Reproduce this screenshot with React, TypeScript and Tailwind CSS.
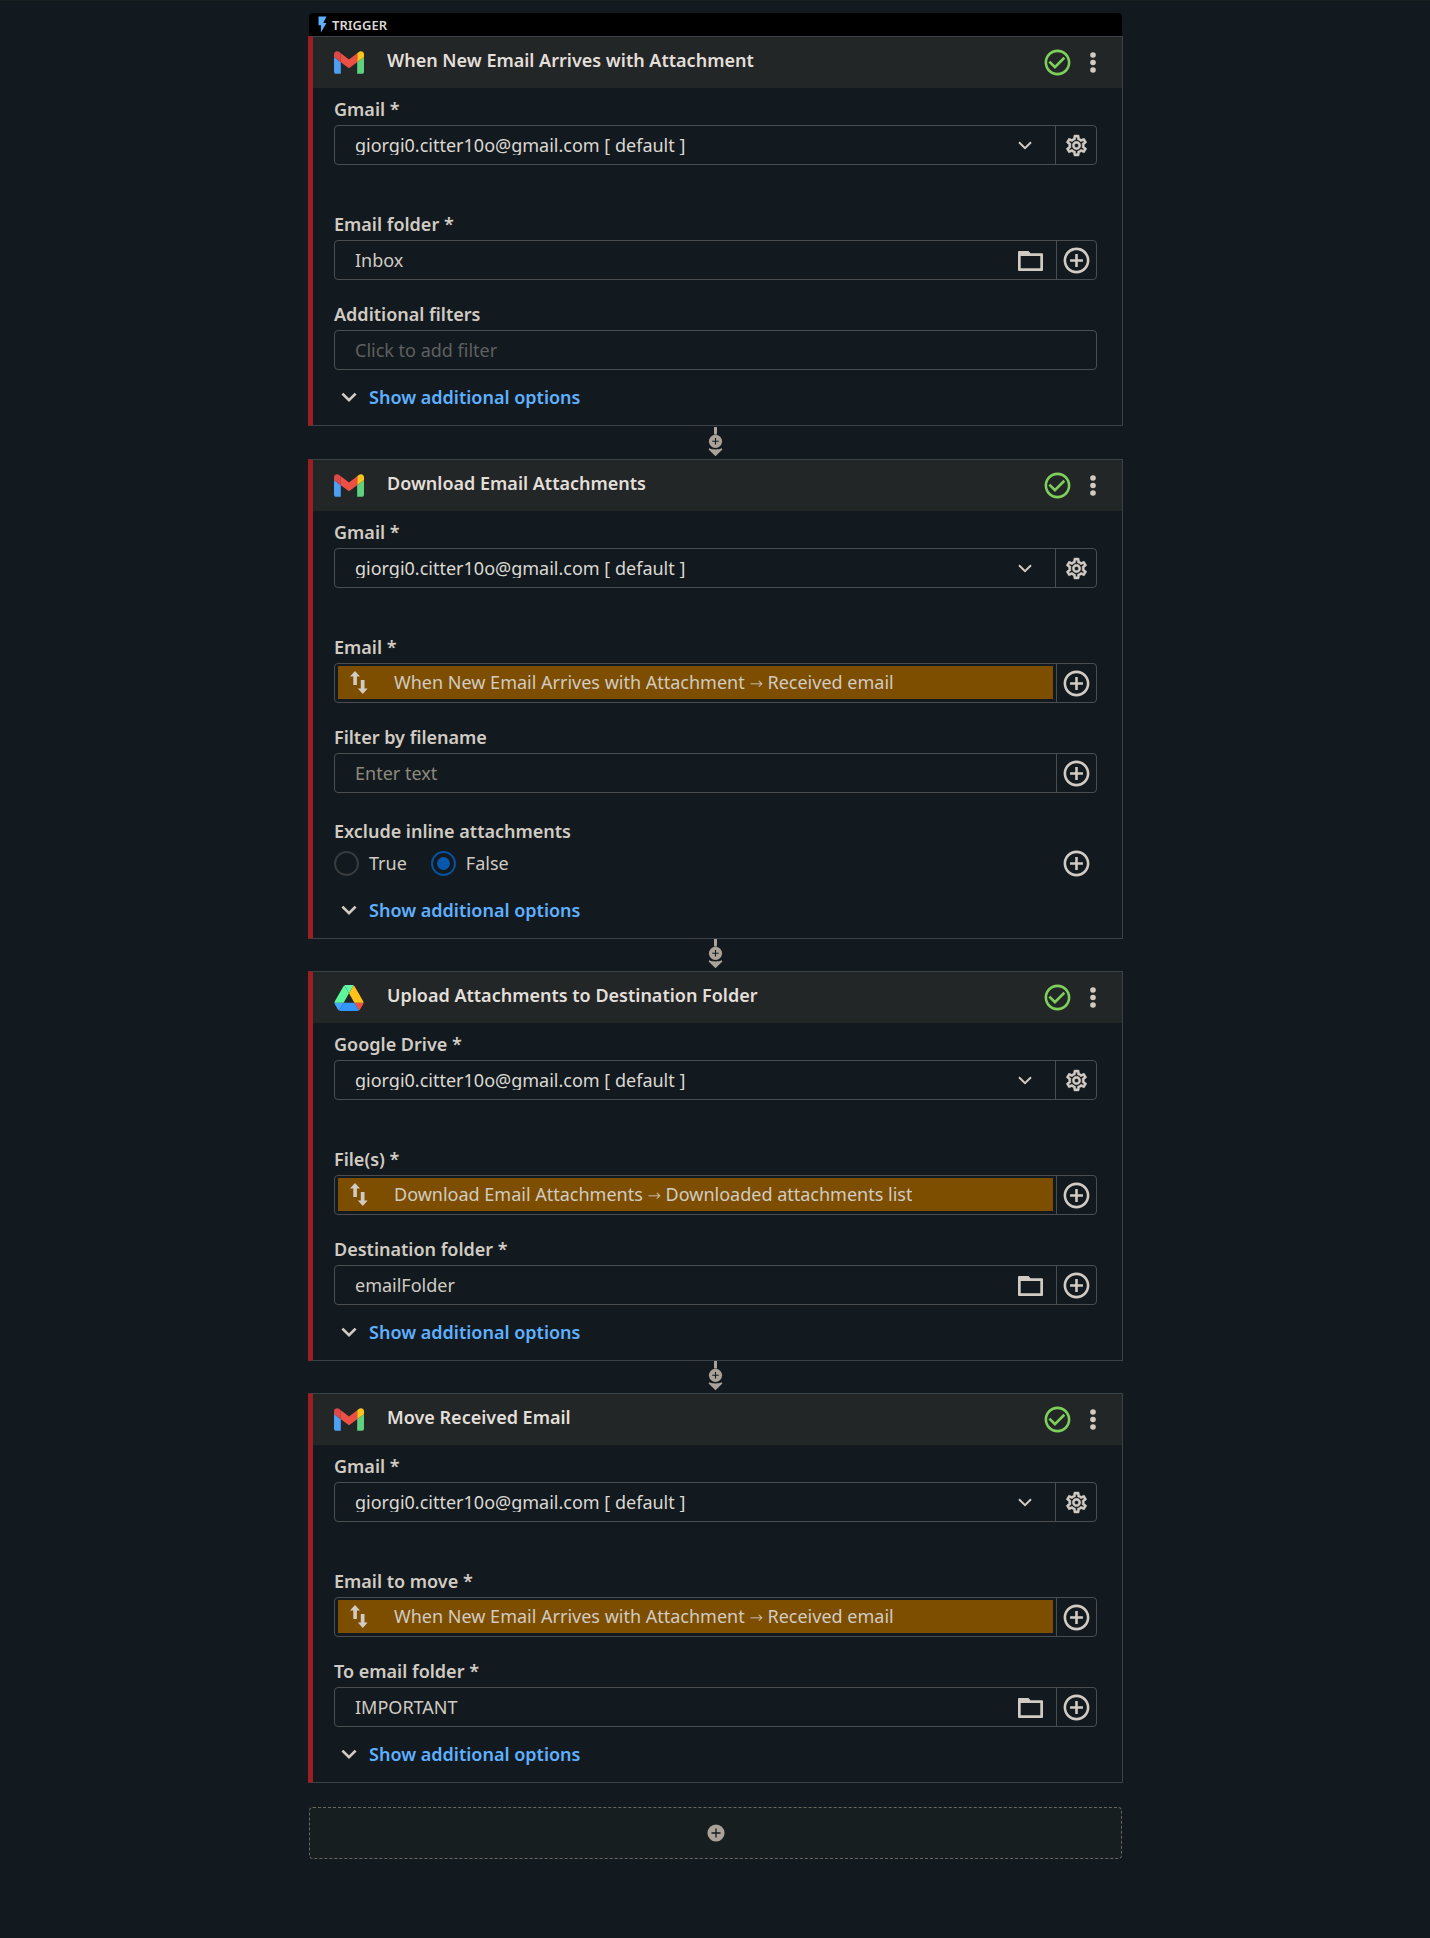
import React, { useId, useState } from "react";
import {
  MdAddCircleOutline,
  MdCheckCircleOutline,
  MdFlashOn,
  MdOutlineSettings,
} from "react-icons/md";

type Field =
  | { kind: "folder"; label: string; value: string }
  | { kind: "filter"; label: string; placeholder: string }
  | { kind: "text"; label: string; placeholder: string }
  | { kind: "mapped"; label: string; step: string; output: string }
  | { kind: "boolean"; label: string; value: boolean };

type Step = {
  title: string;
  service: "gmail" | "drive";
  trigger?: boolean;
  fields: Field[];
};

const ACCOUNT = "giorgi0.citter10o@gmail.com [ default ]";

const steps: Step[] = [
  {
    title: "When New Email Arrives with Attachment",
    service: "gmail",
    trigger: true,
    fields: [
      { kind: "folder", label: "Email folder *", value: "Inbox" },
      { kind: "filter", label: "Additional filters", placeholder: "Click to add filter" },
    ],
  },
  {
    title: "Download Email Attachments",
    service: "gmail",
    fields: [
      {
        kind: "mapped",
        label: "Email *",
        step: "When New Email Arrives with Attachment",
        output: "Received email",
      },
      { kind: "text", label: "Filter by filename", placeholder: "Enter text" },
      { kind: "boolean", label: "Exclude inline attachments", value: false },
    ],
  },
  {
    title: "Upload Attachments to Destination Folder",
    service: "drive",
    fields: [
      {
        kind: "mapped",
        label: "File(s) *",
        step: "Download Email Attachments",
        output: "Downloaded attachments list",
      },
      { kind: "folder", label: "Destination folder *", value: "emailFolder" },
    ],
  },
  {
    title: "Move Received Email",
    service: "gmail",
    fields: [
      {
        kind: "mapped",
        label: "Email to move *",
        step: "When New Email Arrives with Attachment",
        output: "Received email",
      },
      { kind: "folder", label: "To email folder *", value: "IMPORTANT" },
    ],
  },
];

function GmailLogo() {
  return (
    <svg viewBox="52 42 88 66" className="h-[23px] w-[30px]" aria-hidden="true">
      <path fill="#4c9ff2" d="M58 108h14V74L52 59v43c0 3.32 2.69 6 6 6" />
      <path fill="#5fd07f" d="M120 108h14c3.32 0 6-2.69 6-6V59l-20 15" />
      <path fill="#fcc419" d="M120 48v26l20-15v-8c0-7.42-8.47-11.65-14.4-7.2" />
      <path fill="#ec5044" d="M72 74V48l24 18 24-18v26L96 92" />
      <path fill="#dd4848" d="M52 51v8l20 15V48l-5.6-4.2c-5.94-4.45-14.4-.22-14.4 7.2" />
    </svg>
  );
}

function DriveLogo() {
  return (
    <svg viewBox="0 0 87.3 78" className="h-[26px] w-[30px]" aria-hidden="true">
      <path fill="#45a5ff" d="m6.6 66.85 3.85 6.65c.8 1.4 1.95 2.5 3.3 3.3l13.75-23.8h-27.5c0 1.55.4 3.1 1.2 4.5z" />
      <path fill="#5cf79a" d="m43.65 25-13.75-23.8c-1.35.8-2.5 1.9-3.3 3.3l-25.4 44a9.06 9.06 0 0 0 -1.2 4.5h27.5z" />
      <path fill="#ef5245" d="m73.55 76.8c1.35-.8 2.5-1.9 3.3-3.3l1.6-2.75 7.65-13.25c.8-1.4 1.2-2.95 1.2-4.5h-27.502l5.852 11.5z" />
      <path fill="#63f5a8" d="m43.65 25 13.75-23.8c-1.35-.8-2.9-1.2-4.5-1.2h-18.5c-1.6 0-3.15.45-4.5 1.2z" />
      <path fill="#3396fb" d="m59.8 53h-32.3l-13.75 23.8c1.35.8 2.9 1.2 4.5 1.2h50.8c1.6 0 3.15-.45 4.5-1.2z" />
      <path fill="#ffc21a" d="m73.4 26.5-12.7-22c-.8-1.4-1.95-2.5-3.3-3.3l-13.75 23.8 16.15 28h27.45c0-1.55-.4-3.1-1.2-4.5z" />
    </svg>
  );
}

function SwapIcon() {
  return (
    <svg viewBox="0 0 18 23" className="h-[23px] w-[18px] shrink-0" fill="currentColor" aria-hidden="true">
      <path d="M5 0l5 5.4H6.9V14H3.3V5.4H0z" />
      <path d="M12.8 23l-5-5.4h3V9h3.7v8.6h3.1z" />
    </svg>
  );
}

function FolderIcon() {
  return (
    <svg viewBox="0 0 25 20" className="h-5 w-[25px]" fill="currentColor" aria-hidden="true">
      <path
        fillRule="evenodd"
        d="M1 0h9.5l2 2.3H24a1 1 0 0 1 1 1V19a1 1 0 0 1-1 1H1a1 1 0 0 1-1-1V1a1 1 0 0 1 1-1zM2.7 5v12.3h19.6V5z"
      />
    </svg>
  );
}

function KebabIcon() {
  return (
    <svg viewBox="0 0 6 21" className="h-[21px] w-[6px]" fill="currentColor" aria-hidden="true">
      <circle cx="3" cy="3" r="2.8" />
      <circle cx="3" cy="10.5" r="2.8" />
      <circle cx="3" cy="18" r="2.8" />
    </svg>
  );
}

function Connector() {
  return (
    <div className="flex h-8 justify-center">
      <button type="button" aria-label="Insert step" className="text-[#aaa298]">
        <svg viewBox="0 0 15 32" className="h-8 w-[15px]" aria-hidden="true">
          <path fill="currentColor" d="M6 0h3v7.5H6z" />
          <circle cx="7.5" cy="14.3" r="6.6" fill="currentColor" />
          <path d="M4.2 14.3h6.6M7.5 11v6.6" stroke="#121a1f" strokeWidth="1.1" />
          <path fill="currentColor" d="M1.2 21.2C3 22 5 22.4 7.5 22.4s4.5-.4 6.3-1.2l.6 1.2-6.9 6.8L.6 22.4z" />
        </svg>
      </button>
    </div>
  );
}

const labelClass = "mb-1 block text-[18px] leading-6 font-semibold text-[#d1cbc3]";
const boxClass = "flex h-10 rounded-[4px] border border-[#4a4e50]";

function AccountSelect({ label }: { label: string }) {
  const id = useId();
  return (
    <div>
      <label htmlFor={id} className={labelClass}>
        {label}
      </label>
      <div className={boxClass}>
        <div className="relative flex min-w-0 flex-1 items-center">
          <select
            id={id}
            className="w-full appearance-none bg-transparent pr-14 pl-5 text-[18px] leading-5 text-[#dcd8d2] outline-none"
          >
            <option>{ACCOUNT}</option>
          </select>
          <svg
            viewBox="0 0 14 9"
            className="pointer-events-none absolute right-[23px] h-[9px] w-[14px]"
            fill="none"
            stroke="currentColor"
            strokeWidth="2"
            aria-hidden="true"
          >
            <path d="M1 1.2L7 7.2L13 1.2" />
          </svg>
        </div>
        <button
          type="button"
          aria-label="Account settings"
          className="flex w-[41px] shrink-0 items-center justify-center border-l border-[#4a4e50]"
        >
          <MdOutlineSettings
            size={25}
            stroke="currentColor"
            strokeWidth={0.5}
            className="[&>path[fill=none]]:stroke-none"
          />
        </button>
      </div>
    </div>
  );
}

function BooleanField({ label, value }: { label: string; value: boolean }) {
  const name = useId();
  const [checked, setChecked] = useState(value);
  return (
    <fieldset className="mt-[26px]">
      <legend className="text-[18px] leading-6 font-semibold">{label}</legend>
      <div className="flex h-10 items-center justify-between pr-[5px]">
        <div className="flex gap-6">
          {[true, false].map((option) => (
            <label key={String(option)} className="flex items-center gap-[10px] text-[18px] leading-6">
              <input
                type="radio"
                name={name}
                checked={checked === option}
                onChange={() => setChecked(option)}
                className="grid size-[25px] appearance-none place-items-center rounded-full border-2 border-[#383c3e] before:size-[13px] before:rounded-full checked:border-[#07529f] checked:before:bg-[#0758ac]"
              />
              {option ? "True" : "False"}
            </label>
          ))}
        </div>
        <button type="button" aria-label="Insert variable">
          <MdAddCircleOutline size={31} />
        </button>
      </div>
    </fieldset>
  );
}

function FieldRow({ field }: { field: Exclude<Field, { kind: "boolean" }> }) {
  const id = useId();
  return (
    <div>
      <label htmlFor={id} className={labelClass}>
        {field.label}
      </label>
      <div className={boxClass}>
        {field.kind === "mapped" ? (
          <button
            id={id}
            type="button"
            className="m-[3px] mt-0.5 flex min-w-0 flex-1 items-center gap-[26px] bg-[#7d4e00] pl-3 text-left text-[18px] leading-6"
          >
            <SwapIcon />
            <span className="truncate">
              {field.step} <span className="font-['DejaVu_Sans'] text-[16px] font-extralight">→</span> {field.output}
            </span>
          </button>
        ) : (
          <input
            id={id}
            type="text"
            defaultValue={field.kind === "folder" ? field.value : undefined}
            placeholder={field.kind === "folder" ? undefined : field.placeholder}
            className={
              field.kind === "filter"
                ? "min-w-0 flex-1 bg-transparent px-5 text-[18px] leading-6 outline-none placeholder:text-[#5f605f]"
                : "min-w-0 flex-1 bg-transparent px-5 text-[18px] leading-6 outline-none placeholder:text-[#8f897e]"
            }
          />
        )}
        {field.kind === "folder" && (
          <button type="button" aria-label="Browse folders" className="flex w-[52px] shrink-0 items-center justify-center pt-px">
            <FolderIcon />
          </button>
        )}
        {field.kind !== "filter" && (
          <button
            type="button"
            aria-label="Insert variable"
            className="flex w-[40px] shrink-0 items-center justify-center border-l border-[#4a4e50]"
          >
            <MdAddCircleOutline size={31} />
          </button>
        )}
      </div>
    </div>
  );
}

function StepCard({ step }: { step: Step }) {
  return (
    <section className={step.trigger ? "mb-px" : ""}>
      {step.trigger && (
        <div className="mx-px flex h-[23px] items-center rounded-t-[4px] bg-black pl-1 text-[13px] leading-4 font-semibold text-[#dcd8d2]">
          <MdFlashOn size={19} className="text-[#5fb0ff]" />
          TRIGGER
        </div>
      )}
      <div className="border border-l-[5px] border-[#3a4348] border-l-[#9b1f22]">
        <header className="flex h-[51px] items-center bg-[#222626] pr-[26px] pl-[21px]">
          <span className="flex w-[30px] justify-center">
            {step.service === "gmail" ? <GmailLogo /> : <DriveLogo />}
          </span>
          <h2 className="ml-[23px] flex-1 truncate pb-1.5 text-[18px] leading-6 font-semibold text-[#e2dfda]">
            {step.title}
          </h2>
          <MdCheckCircleOutline size={31} className="text-[#7ed05a]" title="Configured" />
          <button type="button" aria-label="Step menu" className="ml-[17px]">
            <KebabIcon />
          </button>
        </header>
        <div className="pt-[9px] pr-[25px] pb-4 pl-[21px]">
          <AccountSelect label={step.service === "gmail" ? "Gmail *" : "Google Drive *"} />
          <div className="mt-[47px] flex flex-col gap-[22px]">
            {step.fields.map((f) =>
              f.kind === "boolean" ? null : <FieldRow key={f.label} field={f} />,
            )}
          </div>
          {step.fields.map((f) =>
            f.kind === "boolean" ? <BooleanField key={f.label} label={f.label} value={f.value} /> : null,
          )}
          <button
            type="button"
            className="mt-[15px] flex items-center gap-3 pl-[7px] text-[18px] leading-6 font-semibold text-[#5fb0ff]"
          >
            <svg
              viewBox="0 0 16 11"
              className="h-[11px] w-4 text-[#d1cbc3]"
              fill="none"
              stroke="currentColor"
              strokeWidth="2.7"
              aria-hidden="true"
            >
              <path d="M1.4 1.6L8 8.2L14.600 1.6" />
            </svg>
            Show additional options
          </button>
        </div>
      </div>
    </section>
  );
}

export default function App() {
  return (
    <main
      className="min-h-screen border-t border-[#1b2023] bg-[#121a1f] pt-3 pb-10 text-[#d1cbc3]"
      style={{ fontFamily: '"Noto Sans", sans-serif' }}
    >
      <div className="mx-auto w-full max-w-[816px] pl-px">
        {steps.map((step, i) => (
          <React.Fragment key={step.title}>
            {i > 0 && <Connector />}
            <StepCard step={step} />
          </React.Fragment>
        ))}
        <div className="mx-px mt-6">
          <button
            type="button"
            aria-label="Add step"
            className="flex h-[52px] w-full items-center justify-center rounded-[4px] border border-dashed border-[#6a655e] bg-[#171e20]"
          >
            <svg viewBox="0 0 18 18" className="size-[18px]" aria-hidden="true">
              <circle cx="9" cy="9" r="8.6" fill="#aaa298" />
              <path d="M4.5 9h9M9 4.5v9" stroke="#121a1f" strokeWidth="1.3" />
            </svg>
          </button>
        </div>
      </div>
    </main>
  );
}
